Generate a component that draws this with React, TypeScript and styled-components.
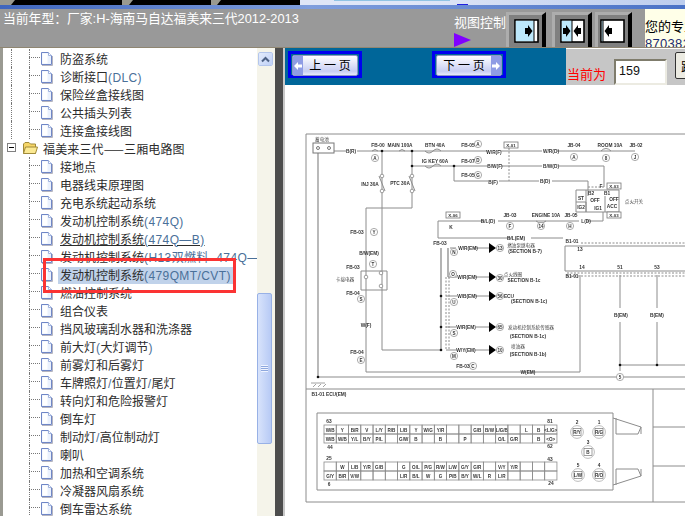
import React from "react";
import styled, { createGlobalStyle } from "styled-components";

const GlobalStyle = createGlobalStyle`
  html, body {
    margin: 0;
    padding: 0;
    background: #ffffff;
    overflow: hidden;
  }
`;

const CJK = `"Noto Sans CJK SC", "Liberation Sans", sans-serif`;
const LATIN = `"Liberation Sans", "Noto Sans CJK SC", sans-serif`;

const Page = styled.div`
  width: 685px;
  height: 516px;
  display: flex;
  flex-direction: column;
  overflow: hidden;
  font-family: ${CJK};
`;

/* leftover of the window behind */
const TopStrip = styled.div`
  height: 5px;
  display: flex;
  background: linear-gradient(90deg, #dfe6f7 60%, #bccdee 100%);
  flex: none;
`;

const StripLeft = styled.div`
  width: 300px;
  flex: none;
  display: flex;
  background: #9a9a90;
`;

const BlackTab = styled.div<{ $w: number; $gap: number }>`
  width: ${(p) => p.$w}px;
  margin-left: ${(p) => p.$gap}px;
  height: 5px;
  background: #000;
  clip-path: polygon(4px 0, 100% 0, 100% 100%, 0 100%);
`;

const StripRight = styled.div`
  flex: 1;
  display: flex;
  padding-left: 34px;
  gap: 7px;
`;

const SkyLine = styled.div`
  width: 116px;
  height: 1px;
  background: #8fc3e4;
`;

const LinkMark = styled.div`
  width: 11px;
  height: 4px;
  border-bottom: 1px solid #2020e0;
`;

const TitleBar = styled.div`
  height: 4px;
  flex: none;
  background: linear-gradient(90deg, #3f66bd 0%, #7f9edd 45%, #4a72c6 100%);
`;

const Header = styled.div`
  height: 38px;
  flex: none;
  background: #999999;
  display: flex;
  border-bottom: 1px solid #8f8672;
  box-sizing: content-box;
`;

const CarTitle = styled.div`
  width: 452px;
  flex: none;
  padding: 2px 0 0 3px;
  box-sizing: border-box;
  color: #fff;
  font-family: ${LATIN};
  font-size: 12.8px;
  line-height: 16px;
  white-space: nowrap;
`;

const ViewControl = styled.div`
  width: 54px;
  flex: none;
  display: flex;
  flex-direction: column;
  padding-top: 5px;
  box-sizing: border-box;
  color: #fff;
  font-size: 13px;
  line-height: 16px;
  padding-left: 2px;
`;

const Triangle = styled.div`
  width: 17px;
  height: 14px;
  margin-top: 3px;
  background: #8000ff;
  clip-path: polygon(0 0, 100% 50%, 0 100%);
`;

const ViewButtons = styled.div`
  width: 139px;
  flex: none;
  display: flex;
  padding-top: 3px;
`;

const ViewButton = styled.div<{ $w: number; $mr: number; $pl: number }>`
  width: ${(p) => p.$w}px;
  margin-right: ${(p) => p.$mr}px;
  height: 35px;
  flex: none;
  box-sizing: border-box;
  background: #808080;
  border-top: 3px solid #adadad;
  border-left: 3px solid #adadad;
  border-right: 4px solid #000;
  display: flex;
  align-items: center;
  padding-left: ${(p) => p.$pl}px;
`;

const Hotline = styled.div`
  flex: 1;
  background: #ffffe8;
  color: #000;
  font-size: 13px;
  line-height: 18px;
  padding-top: 8px;
  overflow: hidden;
  white-space: nowrap;
  height: 38px;
  box-sizing: border-box;
`;

const HotlineNumber = styled.div`
  color: #1a2a70;
  font-family: ${LATIN};
  font-size: 13px;
  letter-spacing: 0.3px;
`;

const Main = styled.div`
  flex: 1;
  display: flex;
  min-height: 0;
`;

const LeftPanel = styled.div`
  width: 275px;
  flex: none;
  display: flex;
  box-sizing: border-box;
  background: #fff;
  border-left: 3px solid #9a9a92;
  position: relative;
`;

const Tree = styled.div`
  flex: none;
  width: 254px;
  padding-top: 1px;
  overflow: hidden;
  position: relative;
`;

const Row = styled.div`
  height: 18px;
  display: flex;
  align-items: center;
  position: relative;
  white-space: nowrap;
`;

const VLine = styled.div<{ $x: number }>`
  position: absolute;
  left: ${(p) => p.$x}px;
  top: 0;
  bottom: 0;
  border-left: 1px dotted #777;
`;

const LeafStub = styled.div`
  position: absolute;
  left: 26px;
  top: 8px;
  width: 11px;
  border-top: 1px dotted #777;
`;

const LeafContent = styled.div`
  margin-left: 37px;
  display: flex;
  align-items: center;
`;

const Label = styled.span<{ $selected?: boolean; $underlined?: boolean; $folder?: boolean }>`
  margin-left: ${(p) => (p.$folder ? 3 : 5)}px;
  margin-top: 2px;
  padding: 0 2px 0 2px;
  height: 17px;
  line-height: 15px;
  font-size: 12px;
  color: #2c2c2c;
  letter-spacing: ${(p) => (p.$folder ? "0.15px" : "0")};
  background: ${(p) => (p.$selected ? "#c0d2ea" : "transparent")};
  text-decoration: ${(p) => (p.$underlined ? "underline" : "none")};
`;

const Latin = styled.span`
  font-family: ${LATIN};
  color: #4a7099;
  font-size: 12px;
  letter-spacing: 0.4px;
`;

const PlusBox = styled.div`
  position: absolute;
  left: 4px;
  top: 4px;
  width: 9px;
  height: 9px;
  box-sizing: border-box;
  border: 1px solid #808080;
  background: #fff;
  &::after {
    content: "";
    position: absolute;
    left: 1px;
    top: 3px;
    width: 5px;
    height: 1px;
    background: #000;
  }
`;

const FolderWrap = styled.div`
  margin-left: 19px;
  display: flex;
`;

const RedBox = styled.div`
  position: absolute;
  left: 40px;
  top: 210px;
  width: 193px;
  height: 35px;
  box-sizing: border-box;
  border: 3.5px solid #fb3333;
`;

const ScrollBar = styled.div`
  width: 18px;
  flex: none;
  background: #f5f4ea;
  position: relative;
`;

const ScrollUp = styled.div`
  position: absolute;
  left: 1px;
  top: 4px;
  width: 15px;
  height: 14px;
  box-sizing: border-box;
  border: 1px solid #fff;
  outline: 1px solid #b4c6ec;
  outline-offset: -1px;
  border-radius: 2px;
  background: linear-gradient(135deg, #e4ecfd, #bfd0f6);
  display: flex;
  align-items: center;
  justify-content: center;
`;

const ScrollThumb = styled.div`
  position: absolute;
  left: 0;
  top: 245px;
  width: 15px;
  height: 151px;
  box-sizing: border-box;
  border: 1px solid #98b1e6;
  border-radius: 2px;
  background: linear-gradient(90deg, #d8e3fb, #b7caf5);
  display: flex;
  align-items: center;
  justify-content: center;
`;

const Grip = styled.div`
  width: 7px;
  height: 7px;
  background: repeating-linear-gradient(180deg, #f0f4ff 0 1px, #8ea8de 1px 2px);
`;

const Splitter = styled.div`
  width: 10px;
  flex: none;
  background: #4d4d4d;
  border-right: 2px solid #c8c8c8;
  box-sizing: border-box;
`;

const RightPanel = styled.div`
  flex: 1;
  display: flex;
  flex-direction: column;
  min-width: 0;
`;

const PageBar = styled.div`
  height: 37px;
  flex: none;
  display: flex;
`;

const PageNav = styled.div`
  width: 281px;
  flex: none;
  background: #006699;
  display: flex;
  align-items: flex-start;
  padding: 3px 0 0 3px;
  box-sizing: border-box;
`;

const NavOutline = styled.div<{ $mr?: number }>`
  width: 74px;
  height: 27px;
  box-sizing: border-box;
  border: 3px solid #0000f0;
  background: #006699;
  margin-right: ${(p) => p.$mr ?? 0}px;
  padding: 1px;
`;

const NavButton = styled.div<{ $flip?: boolean }>`
  height: 100%;
  display: flex;
  flex-direction: ${(p) => (p.$flip ? "row-reverse" : "row")};
  border: 1px solid #8e96c6;
  border-radius: 2px;
  background: linear-gradient(180deg, #ffffff, #c7cdf2 80%, #e7e9fb);
  font-size: 12px;
  line-height: 17px;
  color: #000;
  overflow: hidden;
`;

const NavArrow = styled.div`
  width: 10px;
  flex: none;
  background: #8f9ce4;
  display: flex;
  align-items: center;
  justify-content: center;
`;

const NavText = styled.div`
  flex: 1;
  text-align: center;
  white-space: pre;
`;

const PageInfo = styled.div`
  flex: 1;
  background: #c6c6c6;
  margin-top: 1px;
  display: flex;
  overflow: hidden;
`;

const CurrentLabel = styled.div`
  color: #ff0000;
  font-size: 13px;
  line-height: 18px;
  padding: 16px 0 0 1px;
  width: 47px;
  flex: none;
  white-space: nowrap;
`;

const PageInput = styled.div`
  width: 53px;
  height: 26px;
  margin-top: 10px;
  flex: none;
  box-sizing: border-box;
  background: #fff;
  border: 2px solid;
  border-color: #7f7c6c #ecebe2 #ecebe2 #7f7c6c;
  font-family: ${LATIN};
  font-size: 12.5px;
  line-height: 20px;
  padding-left: 3px;
  color: #111;
`;

const JumpButton = styled.div`
  margin: 3px 0 0 8px;
  width: 40px;
  height: 27px;
  flex: none;
  box-sizing: border-box;
  background: #ecebe2;
  border: 1px solid #333;
  border-radius: 2px;
  font-size: 13px;
  line-height: 25px;
  padding-left: 5px;
  color: #000;
`;

const DiagramArea = styled.div`
  flex: 1;
  background: #fff;
  overflow: hidden;
`;

const DiagramSvg = styled.svg`
  display: block;
  filter: blur(0.35px);
`;

type Item = {
  t: string;
  l?: string;
  t2?: string;
  l2?: string;
  t3?: string;
  sel?: boolean;
  u?: boolean;
  folder?: boolean;
};

const ITEMS: Item[] = [
  { t: "防盗系统" },
  { t: "诊断接口", l: "(DLC)" },
  { t: "保险丝盒接线图" },
  { t: "公共插头列表" },
  { t: "连接盒接线图" },
  { t: "福美来三代——三厢电路图", folder: true },
  { t: "接地点" },
  { t: "电器线束原理图" },
  { t: "充电系统起动系统" },
  { t: "发动机控制系统", l: "(474Q)" },
  { t: "发动机控制系统", l: "(474Q—B)", u: true },
  { t: "发动机控制系统", l: "(H13双燃料\u00a0\u00a0474Q—B" },
  { t: "发动机控制系统", l: "(479QMT/CVT)", sel: true },
  { t: "燃油控制系统" },
  { t: "组合仪表" },
  { t: "挡风玻璃刮水器和洗涤器" },
  { t: "前大灯", l: "(", t2: "大灯调节", l2: ")" },
  { t: "前雾灯和后雾灯" },
  { t: "车牌照灯", l: "/", t2: "位置灯", l2: "/", t3: "尾灯" },
  { t: "转向灯和危险报警灯" },
  { t: "倒车灯" },
  { t: "制动灯", l: "/", t2: "高位制动灯" },
  { t: "喇叭" },
  { t: "加热和空调系统" },
  { t: "冷凝器风扇系统" },
  { t: "倒车雷达系统" },
];

const LeafIcon = () => (
  <svg width="13" height="15" viewBox="0 0 13 15">
    <path d="M1.5 1.5 H8.5 L11.5 4.5 V13.5 H1.5 Z" fill="#eaf1fd" stroke="#6f86c6" />
    <path d="M2.5 2.5 H7.5 V12.5 H2.5 Z" fill="#fff" />
    <path d="M8.5 1.5 V4.5 H11.5" fill="#fff" stroke="#9fb2dd" />
    <path d="M12.5 5 V14.5 H2" fill="none" stroke="#b5b5c0" />
  </svg>
);

const FolderIcon = () => (
  <svg width="16" height="14" viewBox="0 0 16 14">
    <path d="M1.5 3 L3 1.5 H7 L8.5 3 H13.5 V12.5 H1.5 Z" fill="#f6d668" stroke="#a08a3a" />
    <path d="M1.5 12.5 L3.5 6 H15.5 L13.5 12.5 Z" fill="#fbe993" stroke="#a08a3a" />
  </svg>
);

const Arrow = ({ dir }: { dir: "l" | "r" }) => (
  <svg width="8" height="10" viewBox="0 0 8 10">
    {dir === "l" ? (
      <path d="M0 5 L4 1 V3.5 H8 V6.5 H4 V9 Z" fill="#fff" />
    ) : (
      <path d="M8 5 L4 1 V3.5 H0 V6.5 H4 V9 Z" fill="#fff" />
    )}
  </svg>
);

const ViewIcon = ({ split, kind }: { split: number; kind: "right" | "both" | "left" }) => (
  <svg width="25" height="24" viewBox="0 0 25 24">
    <rect x="1" y="1" width="23" height="22" fill="#fff" stroke="#000" strokeWidth="1.6" />
    <rect x="1.8" y="1.8" width={split - 1.8} height="20.4" fill="#bde8fb" />
    <path d={`M${split} 1 V23`} stroke="#000" strokeWidth="1" />
    {kind !== "left" && (
      <path d={`M${split - 9} 9 H${split - 6} V6 L${split - 1.5} 12 L${split - 6} 18 V15 H${split - 9} Z`} fill="#000" />
    )}
    {kind !== "right" && (
      <path d={`M${split + 9} 9 H${split + 6} V6 L${split + 1.5} 12 L${split + 6} 18 V15 H${split + 9} Z`} fill="#000" />
    )}
  </svg>
);

const WIRE = "#8c8c8c";

const Wires = () => (
  <g fill="none" stroke={WIRE} strokeWidth="1">
    <path d="M305 134 H685 M305 134 V502 H685 M305 389 H685" />
    <path d="M652 389 V502 M652 427 H685 M652 466 H685" />
    <path d="M317 153 V377 M317 377 H685" strokeWidth="1.2" />
    <path d="M333 151 H345 M356 151 H487 M500 151 H541 M556 151 H634" />
    <path d="M381 151 V350 H440 M411 151 V208 H365 V372 H579 V275" />
    <path d="M411 166 H487 M500 166 H541 M558 166 H603 V187 M453 166 V181 H487 M498 181 H538 M551 181 H587 V196" />
    <path d="M437 221 H483 M497 221 H578 M586 221 H602 V212 M437 221 V238 H510 M530 238 H562" />
    <path d="M564 246 H685 M564 246 V271 H685" />
    <path d="M580 243 H685 M508 148 V181 M587 187 H603" strokeDasharray="2 1.5" />
    <path d="M440 248 V350 M447 248 V277" strokeWidth="1.3" />
    <path d="M449 248 H455 M473 248 H488 M447 277 H456 M474 277 H488 M445 296 H456 M474 296 H488 M445 327 H455 M475 327 H488 M445 350 H456 M474 350 H488" />
    <path d="M445 277 V350 M448 277 V350" strokeDasharray="2 1.5" />
    <path d="M619 275 V308 M619 322 V371 M656 275 V308 M656 322 V365 M619 365 H685" />
    <path d="M575 190 H618 V212 H575 Z M575 202 H585 V212 M585 190 V212 M604 196 V212" />
    <path d="M566 273 H685 M566 276 H685" strokeDasharray="2 1.5" />
    <path d="M360 271 H386 V290 H360 Z" />
    <path d="M371 151 q3 -3 6 0 M398 151 q3 -3 6 0 M424 151 q4 4 8 0 q4 -4 8 0 M424 166 q4 4 8 0 q4 -4 8 0 M600 151 q5 -5 10 0 M535 221 q5 4 10 0" />
    <path d="M378 176 L384 191 M408 176 L414 191" />
    <path d="M316 413 H612 V490 H316 Z M612 418 L640 427 V434 M612 485 L640 476 V469" />
    <path d="M615 418 V434 H637 L640 427 M615 485 V469 H637 L640 476" />
    <path d="M310 383 H324 M312 387 l3 -3 M317 387 l3 -3 M322 387 l3 -3" strokeWidth="0.8" />
  </g>
);

const CIRCLES: [number, number, string][] = [
  [374, 158, "A"], [373, 232, "Y"], [453, 252, "N"], [452, 274, "O"], [453, 302, "U"],
  [453, 333, "S"], [453, 356, "M"], [360, 299, "S"], [360, 360, "E"], [372, 264, "T"], [472, 366, "C"],
  [477, 144, "A"], [477, 160, "D"], [477, 175, "G"], [573, 157, "A"], [605, 158, "8"], [634, 157, "J"],
  [509, 226, "F"], [540, 226, "14"], [569, 226, "H"], [499, 248, "13"], [499, 278, "30"], [499, 296, "56"],
  [499, 327, "65"], [499, 350, "10"], [619, 377, "5"],
];

const LABELS: [number, number, string][] = [
  [350, 151, "B(R)"], [377, 145, "FB-00"], [399, 145, "MAIN 100A"], [434, 145, "BTN 40A"], [467, 145, "FB-05"],
  [493, 152, "W/R(F)"], [434, 161, "IG KEY 60A"], [467, 161, "FB-07"], [494, 166, "B/W(F)"], [467, 175, "FB-05"],
  [492, 182, "B(F)"], [369, 184, "INJ 30A"], [399, 183, "PTC 30A"], [356, 232, "FB-03"], [368, 253, "B/W(EM)"],
  [352, 267, "FB-03"], [352, 293, "FB-04"], [365, 325, "W(F)"], [356, 352, "FB-04"], [462, 366, "FB-03"],
  [487, 221, "B/L(D)"], [450, 227, "K"], [439, 243, "FB-03"], [467, 248, "W/R(EM)"], [466, 277, "W/R(EM)"],
  [466, 296, "W/B(EM)"], [465, 327, "W/R(EM)"], [465, 350, "W/Y(EM)"], [550, 151, "W/R(D)"], [550, 166, "B/W(D)"],
  [544, 181, "B(D)"], [573, 145, "JB-04"], [609, 145, "ROOM 10A"], [635, 145, "JB-02"], [509, 215, "JB-03"],
  [545, 215, "ENGINE 10A"], [570, 215, "JB-05"], [585, 221, "L(D)"], [515, 238, "B/L(EM)"],
  [571, 241, "B1-01"], [579, 249, "13"], [571, 276, "B1-01"], [581, 267, "14"], [619, 267, "51"], [656, 267, "53"],
  [527, 372, "W(EM)"], [620, 315, "B(EM)"], [656, 315, "B(EM)"], [524, 251, "(SECTION B-7)"],
  [523, 280, "SECTION B-1c"], [508, 296, "ECU"], [528, 301, "(SECTION B-1c)"], [527, 336, "(SECTION B-1c)"],
  [527, 354, "(SECTION B-1b)"], [328, 394, "B1-01 ECU(EM)"], [328, 421, "63"], [329, 447, "44"], [328, 458, "25"],
  [328, 484, "6"], [549, 421, "81"], [549, 446, "62"], [549, 459, "43"], [550, 483, "24"],
  [576, 422, "2"], [598, 422, "1"], [587, 442, "3"], [577, 465, "5"], [598, 465, "4"], [600, 186, "F"],
  [590, 193, "B2"], [606, 193, "B1"], [580, 198, "ST"], [580, 207, "IG2"], [594, 200, "OFF"], [597, 208, "IG1"], [611, 206, "ACC"], [613, 199, "OFF"],
];

const CJK_LABELS: [number, number, string][] = [
  [321, 139, "蓄电池"], [344, 279, "卡接电器"], [633, 201, "点火开关"], [520, 245, "燃油泵继电器"], [512, 274, "点火线圈"],
  [530, 327, "发动机控制系统传感器"], [517, 346, "喷油器"],
];

const BOXES: [number, number, number, string][] = [
  [503, 142, 14, "X-01"], [606, 183, 14, "X-03"], [606, 212, 14, "X-03"], [445, 212, 14, "X-06"],
];

const ROW1 = ["W/B","Y","B/R","V","L/Y","R/B","L/B","Y","W/G","Y/R","","","G/B","B/W","L/G/B","","L","B","<L/G>"];
const ROW2 = ["W/B","W/B","Y/L","B/Y","P/L","","G/W","B","","B","","P","","","O/L","G/R","","B","<O>"];
const ROW3 = ["","W","L/B","Y/R","G/B","","G","O/L","P/G","R/W","L/W","G/Y","G/R","","V/Y","Y/R","","",""];
const ROW4 = ["G/Y","B/R","V/W","","","","L/R","B/L","W","G","P/B","B/Y","W/L","R","L/R","","","",""];

const CELL = 12.26;
const TABLE_X = 323;

const ConnectorBlock = ({ y, rows }: { y: number; rows: string[][] }) => (
  <g>
    {rows.map((cells, r) =>
      cells.map((c, i) => (
        <g key={`${r}-${i}`}>
          <rect x={TABLE_X + i * CELL} y={y + r * 9} width={CELL} height={9} fill="none" stroke={WIRE} strokeWidth="0.8" />
          <text x={TABLE_X + i * CELL + CELL / 2} y={y + r * 9 + 6.5} textAnchor="middle" fontSize="4.6" fontWeight="700" fill="#333" fontFamily={LATIN}>{c}</text>
        </g>
      ))
    )}
  </g>
);

const TERMINALS: [number, number, string][] = [
  [576, 432, "R/Y"], [598, 432, "R/G"], [587, 452, "B"], [577, 475, "L/W"], [598, 475, "R/O"],
];

const Diagram = () => (
  <DiagramSvg width="401" height="431" viewBox="284 85 401 431">
    <Wires />
    <rect x="312" y="143" width="21" height="10" fill="#fff" stroke="#777" />
    <circle cx="317" cy="148" r="1.5" fill="none" stroke="#777" />
    <circle cx="328" cy="148" r="1.5" fill="none" stroke="#777" />
    {[[381, 151], [411, 151], [411, 166], [453, 166], [440, 296], [440, 327], [440, 350], [317, 377], [619, 365], [656, 365]].map(([x, y]) => (
      <circle key={`${x}-${y}`} cx={x} cy={y} r="1.3" fill="#111" />
    ))}
    {[[381, 176], [381, 191], [411, 176], [411, 191], [365, 277], [380, 273], [380, 286]].map(([x, y]) => (
      <circle key={`o${x}-${y}`} cx={x} cy={y} r="1.8" fill="#fff" stroke="#888" strokeWidth="0.8" />
    ))}
    {[248, 277, 296, 327, 350].map((y) => (
      <path key={y} d={`M488 ${y - 5} L495 ${y} L488 ${y + 5} Z`} fill="#000" />
    ))}
    {CIRCLES.map(([x, y, s]) => (
      <g key={`${x}-${y}`}>
        <circle cx={x} cy={y} r="3.6" fill="#fff" stroke="#a0a0a0" strokeWidth="0.9" />
        <text x={x} y={y + 1.7} textAnchor="middle" fontSize="4.6" fontWeight="700" fill="#333" fontFamily={LATIN}>{s}</text>
      </g>
    ))}
    {BOXES.map(([x, y, w, s]) => (
      <g key={`${x}-${y}`}>
        <rect x={x} y={y} width={w} height="6" fill="#fff" stroke="#777" strokeWidth="0.8" />
        <text x={x + w / 2} y={y + 4.5} textAnchor="middle" fontSize="4.4" fontWeight="700" fill="#333" fontFamily={LATIN}>{s}</text>
      </g>
    ))}
    {LABELS.map(([x, y, s]) => (
      <text key={`${x}-${y}-${s}`} x={x} y={y + 1.7} textAnchor="middle" fontSize="4.8" fontWeight="700" fill="#333" fontFamily={LATIN}>{s}</text>
    ))}
    {CJK_LABELS.map(([x, y, s]) => (
      <text key={s} x={x} y={y + 1.7} textAnchor="middle" fontSize="4.6" fill="#444" fontFamily={CJK}>{s}</text>
    ))}
    <ConnectorBlock y={425} rows={[ROW1, ROW2]} />
    <ConnectorBlock y={462} rows={[ROW3, ROW4]} />
    {TERMINALS.map(([x, y, s]) => (
      <g key={s}>
        <circle cx={x} cy={y} r="6.4" fill="#fff" stroke="#b5b5b5" strokeWidth="0.9" />
        <rect x={x - 4} y={y - 3.6} width="8" height="7.2" fill="none" stroke="#777" strokeWidth="0.7" />
        <text x={x} y={y + 1.7} textAnchor="middle" fontSize="4.6" fontWeight="700" fill="#333" fontFamily={LATIN}>{s}</text>
      </g>
    ))}
  </DiagramSvg>
);

export default function App() {
  return (
    <Page>
      <GlobalStyle />
      <TopStrip>
        <StripLeft>
          <BlackTab $w={111} $gap={11} />
          <BlackTab $w={82} $gap={7} />
          <BlackTab $w={83} $gap={6} />
        </StripLeft>
        <StripRight>
          <SkyLine />
          <LinkMark />
        </StripRight>
      </TopStrip>
      <TitleBar />
      <Header>
        <CarTitle>当前年型：厂家:H-海南马自达福美来三代2012-2013</CarTitle>
        <ViewControl>
          视图控制
          <Triangle />
        </ViewControl>
        <ViewButtons>
          <ViewButton $w={40} $mr={6} $pl={5}><ViewIcon split={20} kind="right" /></ViewButton>
          <ViewButton $w={40} $mr={3} $pl={5}><ViewIcon split={12} kind="both" /></ViewButton>
          <ViewButton $w={37} $mr={0} $pl={2}><ViewIcon split={3} kind="left" /></ViewButton>
        </ViewButtons>
        <Hotline>
          您的专业
          <HotlineNumber>87038260</HotlineNumber>
        </Hotline>
      </Header>
      <Main>
        <LeftPanel>
          <Tree>
            {ITEMS.map((it, i) => (
              <Row key={i}>
                {i < 5 && <VLine $x={8} />}
                {i === 5 && <PlusBox />}
                {i !== 5 && <VLine $x={26} />}
                {it.folder ? (
                  <>
                    <FolderWrap><FolderIcon /></FolderWrap>
                    <Label $folder>{it.t}</Label>
                  </>
                ) : (
                  <>
                    <LeafStub />
                    <LeafContent>
                      <LeafIcon />
                      <Label $selected={it.sel} $underlined={it.u}>
                        {it.t}
                        {it.l && <Latin>{it.l}</Latin>}
                        {it.t2}
                        {it.l2 && <Latin>{it.l2}</Latin>}
                        {it.t3}
                      </Label>
                    </LeafContent>
                  </>
                )}
              </Row>
            ))}
          </Tree>
          <ScrollBar>
            <ScrollUp>
              <svg width="9" height="7" viewBox="0 0 9 7">
                <path d="M1 5.5 L4.5 2 L8 5.5" fill="none" stroke="#4d6185" strokeWidth="2" />
              </svg>
            </ScrollUp>
            <ScrollThumb><Grip /></ScrollThumb>
          </ScrollBar>
          <RedBox />
        </LeftPanel>
        <Splitter />
        <RightPanel>
          <PageBar>
            <PageNav>
              <NavOutline $mr={70}>
                <NavButton>
                  <NavArrow><Arrow dir="l" /></NavArrow>
                  <NavText>上 一 页</NavText>
                </NavButton>
              </NavOutline>
              <NavOutline>
                <NavButton $flip>
                  <NavArrow><Arrow dir="r" /></NavArrow>
                  <NavText>下 一 页</NavText>
                </NavButton>
              </NavOutline>
            </PageNav>
            <PageInfo>
              <CurrentLabel>当前为</CurrentLabel>
              <PageInput>159</PageInput>
              <JumpButton>跳转</JumpButton>
            </PageInfo>
          </PageBar>
          <DiagramArea>
            <Diagram />
          </DiagramArea>
        </RightPanel>
      </Main>
    </Page>
  );
}
